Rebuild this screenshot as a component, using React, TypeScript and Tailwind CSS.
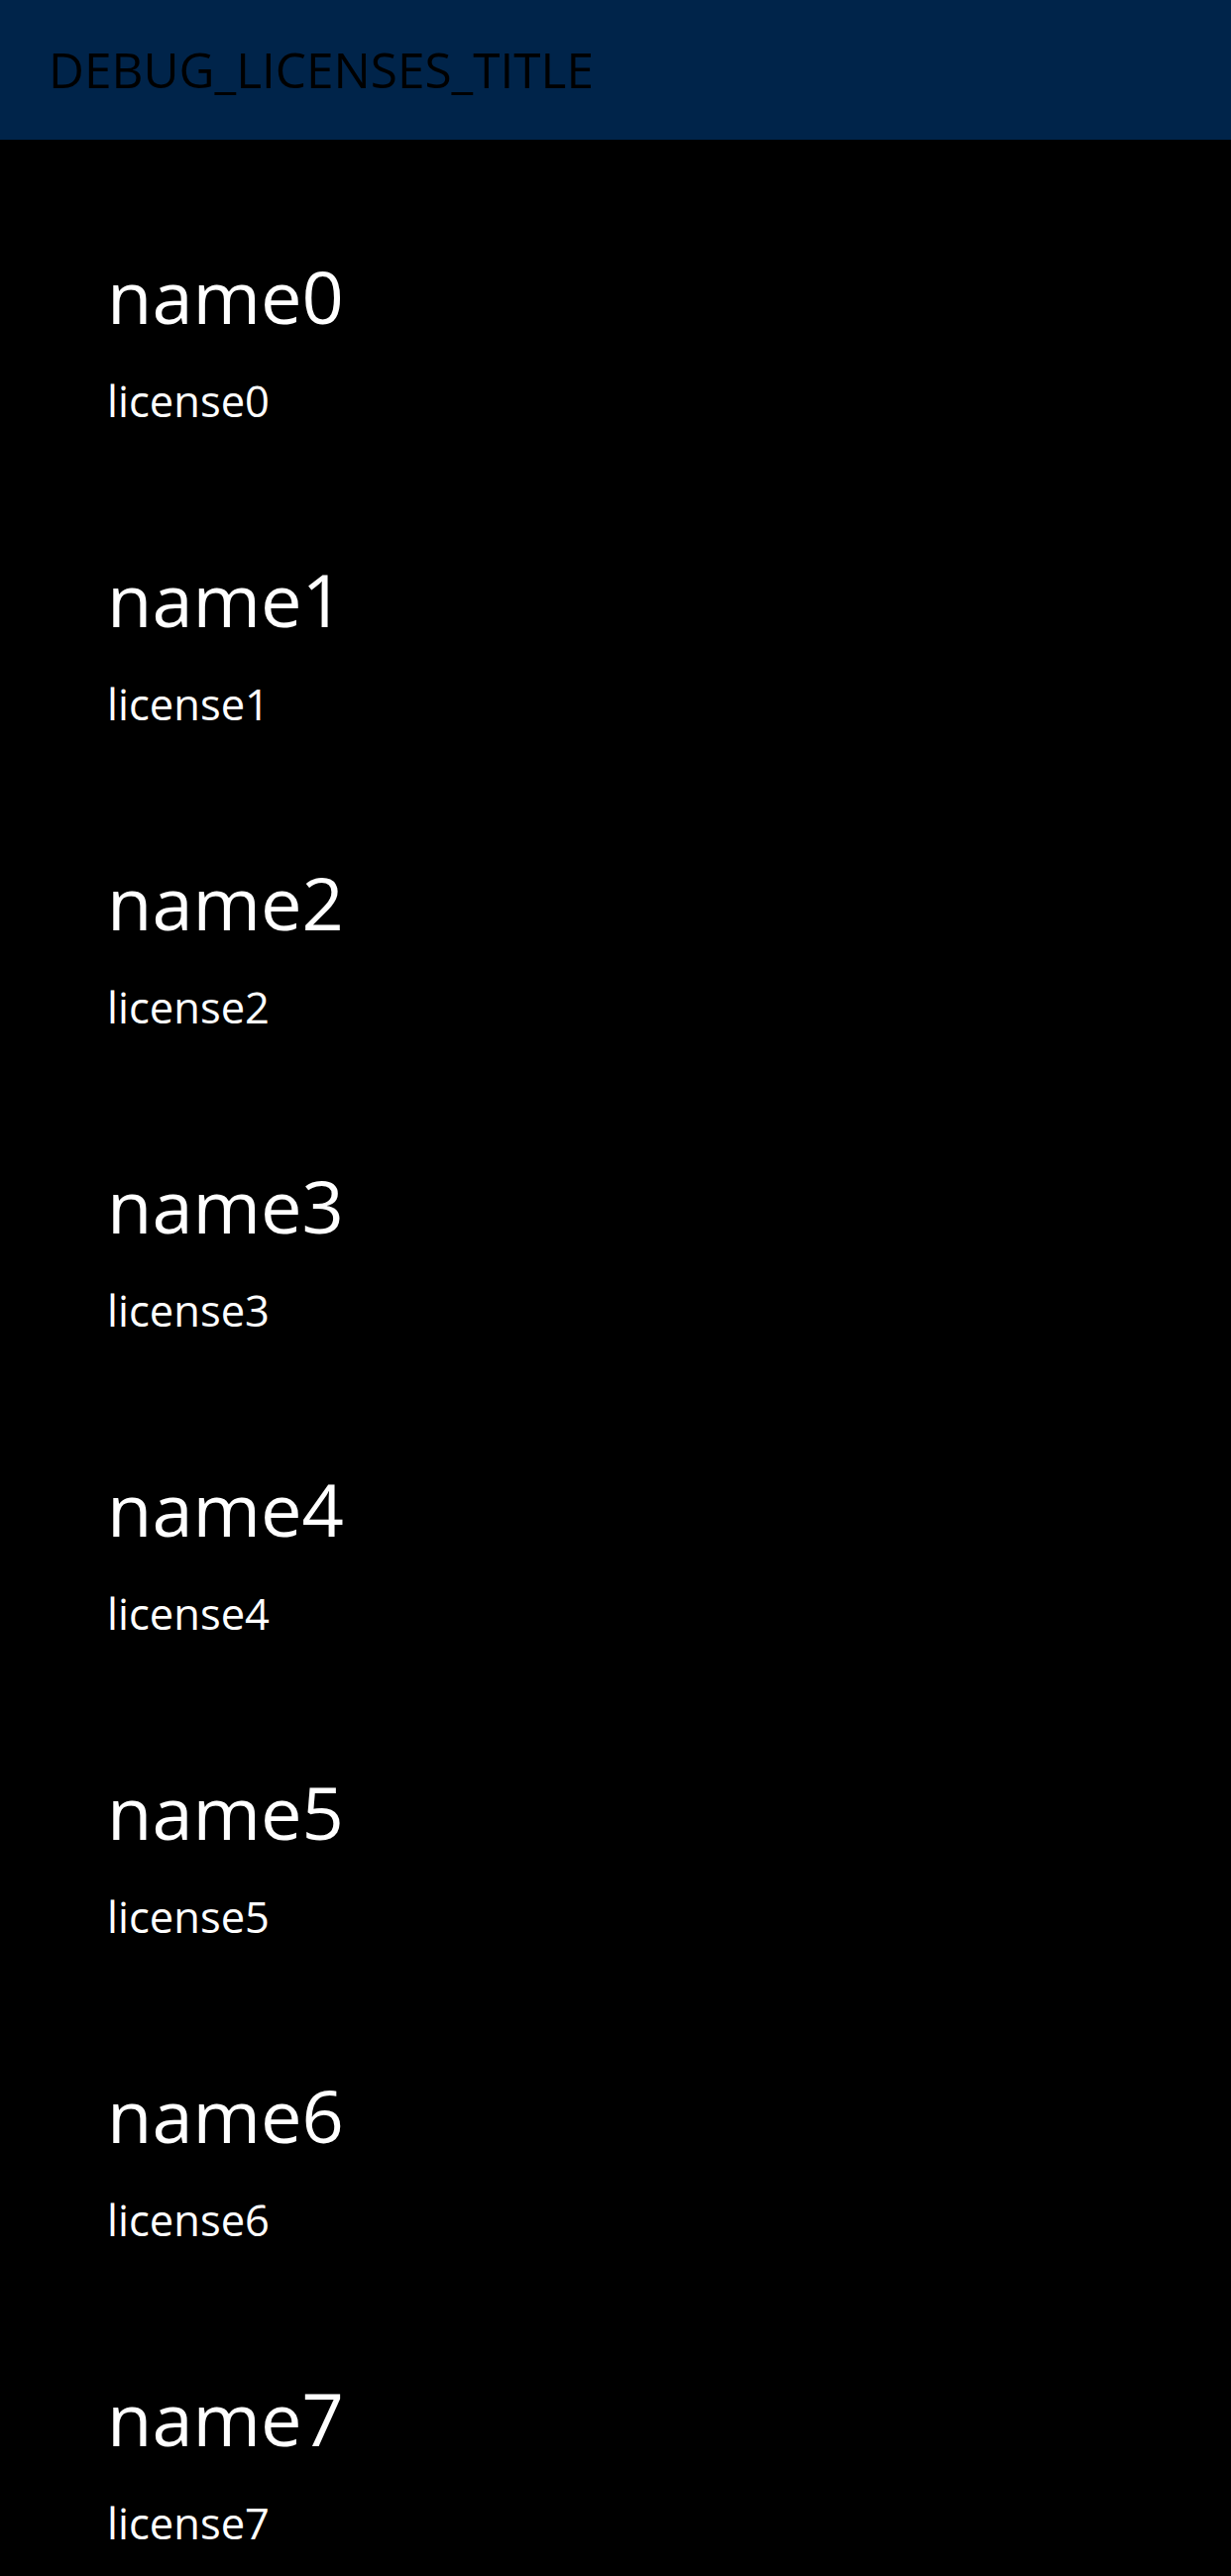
const licenses = Array.from({ length: 8 }, (_, i) => ({
  name: `name${i}`,
  license: `license${i}`,
}));

const App = () => {
  return (
    <div className="w-[1242px] min-h-[2600px] bg-black font-['Open_Sans',sans-serif]">
      <header className="h-[141px] bg-[#00244a] flex items-center pl-[49px]">
        <h1 className="text-[49.5px] leading-none text-black">DEBUG_LICENSES_TITLE</h1>
      </header>
      <ul className="flex flex-col">
        {licenses.map((item) => (
          <li key={item.name} className="pl-[108px] pt-[108px] pb-[12px] text-white">
            <div className="text-[74px] leading-[100px]">{item.name}</div>
            <div className="mt-[26px] text-[43.5px] leading-[60px]">{item.license}</div>
          </li>
        ))}
      </ul>
    </div>
  );
};

export default App;
